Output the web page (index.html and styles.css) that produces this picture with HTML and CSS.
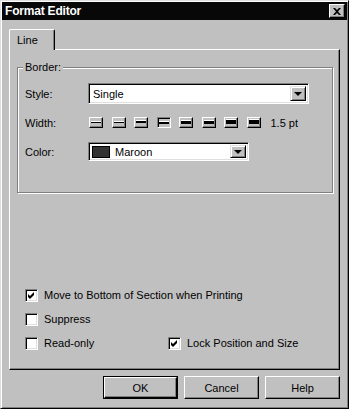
FILE: index.html
```html
<!DOCTYPE html>
<html lang="en">
<head>
  <meta charset="UTF-8">
  <title>Format Editor</title>
  <link rel="stylesheet" href="styles.css">
</head>
<body>
  <div class="window">
    <div class="titlebar">
      <span class="title">Format Editor</span>
      <span class="close-btn">
        <svg width="8" height="7" viewBox="0 0 8 7"><path d="M0 0h2l2 2 2-2h2L5 3.5 8 7H6L4 5 2 7H0l3-3.5z" fill="#000"/></svg>
      </span>
    </div>

    <div class="content">
      <div class="tabs">
        <div class="tab">Line</div>
      </div>

      <div class="panel">
        <div class="group">
          <span class="group-label">Border:</span>

          <div class="row row-style">
            <span class="label">Style:</span>
            <div class="combo combo-style">
              <span class="combo-text">Single</span>
              <span class="combo-btn"><span class="arrow"></span></span>
            </div>
          </div>

          <div class="row row-width">
            <span class="label">Width:</span>
            <div class="widths">
              <span class="wbtn"><span class="wline w1"></span></span>
              <span class="wbtn"><span class="wline w1"></span></span>
              <span class="wbtn"><span class="wline w2"></span></span>
              <span class="wbtn selected"><span class="wline w2"></span></span>
              <span class="wbtn"><span class="wline w3"></span></span>
              <span class="wbtn"><span class="wline w3"></span></span>
              <span class="wbtn"><span class="wline w4"></span></span>
              <span class="wbtn"><span class="wline w4"></span></span>
            </div>
            <span class="pt">1.5 pt</span>
          </div>

          <div class="row row-color">
            <span class="label">Color:</span>
            <div class="combo combo-color">
              <span class="swatch"></span>
              <span class="combo-text">Maroon</span>
              <span class="combo-btn"><span class="arrow"></span></span>
            </div>
          </div>
        </div>

        <div class="checks">
          <div class="check-row">
            <span class="check">
              <svg width="9" height="9" viewBox="0 0 9 9"><path d="M1 3l2 2 4-4v3L3 8 1 6z" fill="#000"/></svg>
            </span>
            <span>Move to Bottom of Section when Printing</span>
          </div>
          <div class="check-row">
            <span class="check"></span>
            <span>Suppress</span>
          </div>
          <div class="check-row">
            <div class="check-cell">
              <span class="check"></span>
              <span>Read-only</span>
            </div>
            <div class="check-cell">
              <span class="check">
                <svg width="9" height="9" viewBox="0 0 9 9"><path d="M1 3l2 2 4-4v3L3 8 1 6z" fill="#000"/></svg>
              </span>
              <span>Lock Position and Size</span>
            </div>
          </div>
        </div>
      </div>

      <div class="actions">
        <span class="btn default"><span class="btn-inner">OK</span></span>
        <span class="btn"><span class="btn-inner">Cancel</span></span>
        <span class="btn"><span class="btn-inner">Help</span></span>
      </div>
    </div>
  </div>
</body>
</html>
```

FILE: styles.css
```css
body {
  margin: 0;
  padding: 0;
  background-color: #c0c0c0;
  font-family: "Liberation Sans", Arial, sans-serif;
  font-size: 11px;
  color: #000;
}

.window {
  width: 349px;
  height: 409px;
  box-sizing: border-box;
  padding: 1px;
  background-color: #c0c0c0;
  border: 1px solid;
  border-color: #dfdfdf #000 #000 #dfdfdf;
  box-shadow: inset 1px 1px 0 #fff, inset -1px -1px 0 #808080;
  display: flex;
  flex-direction: column;
}

/* title bar */
.titlebar {
  height: 18px;
  background-color: #080808;
  display: flex;
  align-items: center;
  justify-content: space-between;
  padding: 0 2px 0 3px;
}

.title {
  color: #fff;
  font-weight: bold;
  font-size: 12px;
  letter-spacing: -0.2px;
}

.close-btn {
  width: 16px;
  height: 14px;
  box-sizing: border-box;
  background-color: #c0c0c0;
  border: 1px solid;
  border-color: #fff #000 #000 #fff;
  box-shadow: inset -1px -1px 0 #808080;
  display: flex;
  align-items: center;
  justify-content: center;
}

.close-btn svg {
  display: block;
}

.content {
  flex: 1;
  display: flex;
  flex-direction: column;
  padding: 9px 7px 0 7px;
}

/* tabs */
.tabs {
  display: flex;
  height: 20px;
}

.tab {
  width: 46px;
  height: 21px;
  box-sizing: border-box;
  border: 1px solid;
  border-color: #fff #000 transparent #fff;
  border-bottom: none;
  border-radius: 2px 2px 0 0;
  box-shadow: inset -1px 0 0 #808080;
  background-color: #c0c0c0;
  padding: 4px 0 0 7px;
  position: relative;
  z-index: 1;
}

/* panel */
.panel {
  height: 321px;
  box-sizing: border-box;
  border: 1px solid;
  border-color: #fff #000 #000 #fff;
  box-shadow: inset -1px -1px 0 #808080;
  display: flex;
  flex-direction: column;
}

.group {
  position: relative;
  margin: 17px 6px 0 7px;
  height: 126px;
  box-sizing: border-box;
  border: 1px solid #808080;
  box-shadow: inset 1px 1px 0 #fff, 1px 1px 0 #fff;
  padding: 15px 0 0 7px;
  display: flex;
  flex-direction: column;
  gap: 6px;
}

.group-label {
  position: absolute;
  top: -7px;
  left: 5px;
  padding: 0 2px;
  background-color: #c0c0c0;
}

.row {
  display: flex;
  align-items: center;
}

.row-style { height: 21px; }
.row-width { height: 25px; }
.row-color { height: 19px; margin-top: 1px; }

.label {
  width: 63px;
}

/* combo boxes */
.combo {
  box-sizing: border-box;
  height: 100%;
  background-color: #fff;
  border: 1px solid;
  border-color: #808080 #fff #fff #808080;
  box-shadow: inset 1px 1px 0 #000, inset -1px -1px 0 #dfdfdf;
  display: flex;
  align-items: center;
  padding: 2px;
}

.combo-style { width: 221px; }
.combo-color { width: 161px; }

.combo-text {
  flex: 1;
  padding-left: 2px;
}

.combo-color .combo-text {
  padding-left: 5px;
}

.combo-btn {
  width: 16px;
  height: 100%;
  box-sizing: border-box;
  background-color: #c0c0c0;
  border: 1px solid;
  border-color: #dfdfdf #000 #000 #dfdfdf;
  box-shadow: inset 1px 1px 0 #fff, inset -1px -1px 0 #808080;
  display: flex;
  align-items: center;
  justify-content: center;
}

.arrow {
  width: 0;
  height: 0;
  border-left: 4px solid transparent;
  border-right: 4px solid transparent;
  border-top: 4px solid #000;
  margin-top: 1px;
}

.swatch {
  width: 18px;
  height: 12px;
  box-sizing: border-box;
  background-color: #333;
  border: 1px solid #000;
  margin-left: 1px;
}

/* line width picker */
.widths {
  display: flex;
  gap: 8.5px;
  margin-left: 1px;
}

.wbtn {
  width: 14px;
  height: 11px;
  box-sizing: border-box;
  background-color: #c0c0c0;
  border: 1px solid;
  border-color: #fff #000 #000 #fff;
  box-shadow: inset -1px -1px 0 #808080;
  display: flex;
  align-items: center;
  justify-content: center;
  padding: 0 1px 1px 1px;
}

.wbtn.selected {
  border-color: #808080 #fff #fff #808080;
  box-shadow: inset 1px 1px 0 #000;
  padding: 1px 0 0 1px;
}

.wline {
  display: block;
  width: 10px;
  background-color: #000;
  box-shadow: 0 -1px 0 #fff;
}

.w1 { height: 1px; }
.w2 { height: 2px; }
.w3 { height: 3px; }
.w4 { height: 4px; }

.pt {
  margin-left: 10px;
}

/* check boxes */
.checks {
  margin-top: auto;
  padding: 0 0 14px 15px;
}

.check-row {
  height: 24px;
  display: flex;
  align-items: center;
  gap: 6px;
}

.check-cell {
  display: flex;
  align-items: center;
  gap: 6px;
}

.check-cell:first-child {
  width: 137px;
}

.check {
  width: 13px;
  height: 13px;
  box-sizing: border-box;
  background-color: #fff;
  border: 1px solid;
  border-color: #808080 #fff #fff #808080;
  box-shadow: inset 1px 1px 0 #000, inset -1px -1px 0 #dfdfdf;
  padding: 1px;
}

.check svg {
  display: block;
}

/* dialog buttons */
.actions {
  display: flex;
  justify-content: flex-end;
  gap: 6px;
  margin-top: 6px;
}

.btn {
  width: 75px;
  height: 23px;
  box-sizing: border-box;
  border: 1px solid;
  border-color: #fff #000 #000 #fff;
  box-shadow: inset -1px -1px 0 #808080;
  display: flex;
  align-items: center;
  justify-content: center;
}

.btn.default {
  border: 1px solid #000;
  box-shadow: none;
  padding: 0;
}

.btn.default .btn-inner {
  width: 100%;
  height: 100%;
  box-sizing: border-box;
  border: 1px solid;
  border-color: #fff #000 #000 #fff;
  box-shadow: inset -1px -1px 0 #808080;
  display: flex;
  align-items: center;
  justify-content: center;
}
```
